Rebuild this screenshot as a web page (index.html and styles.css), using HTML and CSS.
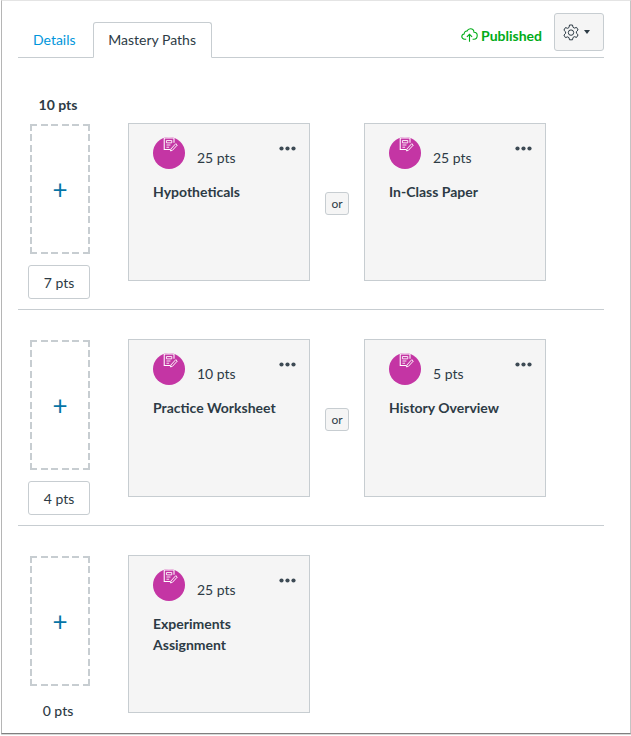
FILE: index.html
```html
<!DOCTYPE html>
<html lang="en">
<head>
<meta charset="utf-8">
<title>Mastery Paths</title>
<link rel="stylesheet" href="styles.css">
</head>
<body>
<svg class="defs" width="0" height="0" aria-hidden="true">
  <symbol id="quiz" viewBox="0 0 18 18">
    <path d="M2.5 1h11v5.5M2.5 1v13h6.500" fill="none" stroke="#fff" stroke-width="1.2"/>
    <path d="M5 4h6v2.6H5zM5 9h4.5M5 11.5h3" fill="none" stroke="#fff" stroke-width="1"/>
    <path d="M10 13.500l5.500-6 1.700 1.600-5.600 6-2.200.500z" fill="none" stroke="#fff" stroke-width="1.1"/>
  </symbol>
  <symbol id="more" viewBox="0 0 17 5">
    <circle cx="2.5" cy="2.5" r="2.1"/><circle cx="8.5" cy="2.5" r="2.1"/><circle cx="14.5" cy="2.5" r="2.1"/>
  </symbol>
</svg>
<main class="frame">
  <header class="top">
    <nav class="tabs">
      <a class="tab">Details</a>
      <a class="tab tab-active">Mastery Paths</a>
    </nav>
    <div class="status">
      <svg class="cloud" width="17" height="14" viewBox="0 0 17 14" fill="none" stroke="#00ac18" stroke-width="1.1">
        <path d="M5.2 11.2H3.6C2 11.2.8 10 .8 8.6c0-1.3 1-2.4 2.3-2.6C3.3 3.900 4.700 2.800 6 3.100 6.700 1.600 8 .8 9.400.8c2 0 3.500 1.500 3.600 3.500 1.900 0 3.200 1.300 3.200 3.200 0 2-1.400 3.700-3.300 3.700h-1.300"/>
        <path d="M8.500 13.700V6.300M5.900 8.900l2.600-2.600 2.600 2.600"/>
      </svg>
      <span class="published">Published</span>
      <button class="gear-btn" type="button" aria-label="Settings">
        <svg width="16" height="17" viewBox="0 0 16 17" fill="none" stroke="#2d3b45" stroke-width="1">
          <path d="M6.500 1h3l.5 2.300 1.300.8 2.300-.7 1.500 2.600-1.700 1.600v1.600l1.700 1.600-1.500 2.600-2.300-.7-1.300.8-.5 2.300h-3L6 13.700l-1.300-.8-2.300.7L.9 11l1.700-1.600V7.800L.9 6.200l1.500-2.600 2.300.7L6 3.500z" stroke-linejoin="round"/>
          <circle cx="8" cy="8.600" r="2.700"/>
        </svg>
        <span class="caret"></span>
      </button>
    </div>
  </header>

  <section class="range range-first">
    <div class="side">
      <div class="score score-top">10 pts</div>
      <div class="drop">+</div>
      <div class="score-box">7 pts</div>
    </div>
    <div class="cards">
      <article class="card">
        <div class="card-head">
          <span class="badge"><svg class="quiz" width="16" height="16"><use href="#quiz"/></svg></span>
          <span class="pts">25 pts</span>
          <svg class="more" width="17" height="5"><use href="#more"/></svg>
        </div>
        <h3 class="name">Hypotheticals</h3>
      </article>
      <div class="or-wrap"><span class="or">or</span></div>
      <article class="card">
        <div class="card-head">
          <span class="badge"><svg class="quiz" width="16" height="16"><use href="#quiz"/></svg></span>
          <span class="pts">25 pts</span>
          <svg class="more" width="17" height="5"><use href="#more"/></svg>
        </div>
        <h3 class="name">In-Class Paper</h3>
      </article>
    </div>
  </section>

  <section class="range">
    <div class="side">
      <div class="drop">+</div>
      <div class="score-box">4 pts</div>
    </div>
    <div class="cards">
      <article class="card">
        <div class="card-head">
          <span class="badge"><svg class="quiz" width="16" height="16"><use href="#quiz"/></svg></span>
          <span class="pts">10 pts</span>
          <svg class="more" width="17" height="5"><use href="#more"/></svg>
        </div>
        <h3 class="name">Practice Worksheet</h3>
      </article>
      <div class="or-wrap"><span class="or">or</span></div>
      <article class="card">
        <div class="card-head">
          <span class="badge"><svg class="quiz" width="16" height="16"><use href="#quiz"/></svg></span>
          <span class="pts">5 pts</span>
          <svg class="more" width="17" height="5"><use href="#more"/></svg>
        </div>
        <h3 class="name">History Overview</h3>
      </article>
    </div>
  </section>

  <section class="range range-last">
    <div class="side">
      <div class="drop">+</div>
      <div class="score score-bottom">0 pts</div>
    </div>
    <div class="cards">
      <article class="card">
        <div class="card-head">
          <span class="badge"><svg class="quiz" width="16" height="16"><use href="#quiz"/></svg></span>
          <span class="pts">25 pts</span>
          <svg class="more" width="17" height="5"><use href="#more"/></svg>
        </div>
        <h3 class="name">Experiments<br>Assignment</h3>
      </article>
    </div>
  </section>
</main>
</body>
</html>
```
FILE: styles.css
```css
* { box-sizing: border-box; }
html, body { margin: 0; padding: 0; background: #fff; }
body { width: 631px; height: 736px; overflow: hidden; font-family: Lato, "Liberation Sans", sans-serif; color: #2d3b45; }
.defs { position: absolute; }
.frame {
  width: 630px; height: 734px;
  margin-left: 1px;
  padding: 0 26px 0 16px;
  background: #fff;
  border-left: 1px solid #b5b5b5;
  border-right: 1px solid #c4c4c4;
  border-top: 1px solid #e4e4e4;
  border-bottom: 1px solid #808080;
  box-shadow: 0 1px 0 #d8d8d8;
}
.top { display: flex; justify-content: space-between; align-items: flex-end; height: 57px; border-bottom: 1px solid #c7cdd1; }
.tabs { display: flex; height: 36px; margin-bottom: -1px; padding-left: 1px; }
.tab { display: flex; align-items: center; justify-content: center; padding: 0 14px 2px; font-size: 14px; color: #0096db; height: 36px; }
.tab-active { width: 119px; margin-left: 3px; padding: 0 0 2px; color: #2d3b45; background: #fff; border: 1px solid #c7cdd1; border-bottom-color: #fff; border-radius: 3px 3px 0 0; }
.status { display: flex; align-items: center; align-self: flex-start; height: 38px; margin-top: 12px; }
.cloud { margin-right: 3px; margin-top: 6px; }
.published { font-size: 14px; font-weight: 700; color: #00ac18; margin-right: 12px; margin-top: 6px; }
.gear-btn { display: flex; align-items: center; justify-content: center; gap: 5px; width: 50px; height: 38px; padding: 0 5px 0 0; background: #f5f5f5; border: 1px solid #c7cdd1; border-radius: 3px; }
.caret { width: 0; height: 0; border-left: 3.500px solid transparent; border-right: 3.500px solid transparent; border-top: 4px solid #2d3b45; margin-bottom: 1px; }

.range { position: relative; display: flex; height: 216px; padding-top: 29px; border-bottom: 1px solid #c7cdd1; }
.range-first { height: 252px; padding-top: 65px; }
.range-last { height: 208px; border-bottom: 0; }
.side { position: relative; width: 110px; flex: none; padding-left: 12px; }
.drop {
  display: flex; align-items: center; justify-content: center;
  width: 60px; height: 130px; margin-top: 1px;
  color: #0574a6; font-size: 26px; line-height: 1;
  background:
    repeating-linear-gradient(90deg, #c7cdd1 0 7px, transparent 7px 10.600px) left top / 100% 2px no-repeat,
    repeating-linear-gradient(90deg, #c7cdd1 0 7px, transparent 7px 10.600px) left bottom / 100% 2px no-repeat,
    repeating-linear-gradient(180deg, #c7cdd1 0 7px, transparent 7px 10.250px) left top / 2px 100% no-repeat,
    repeating-linear-gradient(180deg, #c7cdd1 0 7px, transparent 7px 10.250px) right top / 2px 100% no-repeat;
}
.score-top, .score-bottom { position: absolute; left: 0; width: 80px; text-align: center; }
.score { font-size: 14px; line-height: 20px; }
.score-top { top: -28px; font-weight: 700; }
.score-bottom { top: 146px; font-weight: 500; }
.score-box { display: flex; align-items: center; justify-content: center; width: 62px; height: 34px; margin: 11px 0 0 -2px; background: #fff; border: 1px solid #c7cdd1; border-radius: 3px; font-size: 14px; }

.cards { display: flex; }
.card { width: 182px; height: 158px; padding: 0 24px; background: #f5f5f5; border: 1px solid #c7cdd1; }
.card-head { position: relative; display: flex; height: 46px; }
.badge { display: flex; justify-content: center; width: 32px; height: 32px; margin-top: 13px; border-radius: 50%; background: #c435a4; overflow: hidden; }
.quiz { margin: 0 0 0 1px; }
.pts { margin: 26px 0 0 12px; font-size: 14px; line-height: 16px; }
.more { position: absolute; right: -11px; top: 22px; fill: #3d4a54; }
.name { margin: 11px 0 0; font-size: 14px; font-weight: 700; line-height: 21px; }
.or-wrap { display: flex; align-items: center; justify-content: center; width: 54px; height: 158px; padding-top: 2px; }
.or { display: flex; align-items: center; justify-content: center; width: 24px; height: 23px; background: #f5f5f5; border: 1px solid #c7cdd1; border-radius: 3px; font-size: 12px; }
```
